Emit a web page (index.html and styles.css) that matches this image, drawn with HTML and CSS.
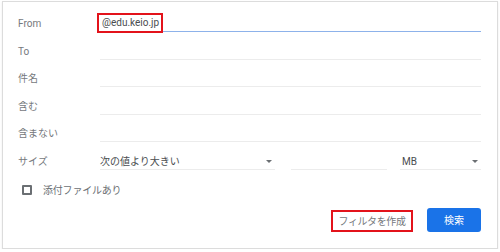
FILE: index.html
```html
<!DOCTYPE html>
<html lang="ja">
<head>
<meta charset="utf-8">
<title>検索オプション</title>
<link rel="stylesheet" href="styles.css">
</head>
<body>
<div class="panel">
  <div class="rows">
    <div class="row">
      <div class="label">From</div>
      <div class="field active"><span class="mark">@edu.keio.jp</span></div>
    </div>
    <div class="row">
      <div class="label">To</div>
      <div class="field"></div>
    </div>
    <div class="row">
      <div class="label">件名</div>
      <div class="field"></div>
    </div>
    <div class="row">
      <div class="label">含む</div>
      <div class="field"></div>
    </div>
    <div class="row">
      <div class="label">含まない</div>
      <div class="field"></div>
    </div>
    <div class="row">
      <div class="label">サイズ</div>
      <div class="size">
        <div class="field select sel1"><span>次の値より大きい</span><i class="caret"></i></div>
        <div class="field num"></div>
        <div class="field select sel2"><span>MB</span><i class="caret"></i></div>
      </div>
    </div>
  </div>
  <label class="check">
    <span class="box"></span>
    <span class="check-text">添付ファイルあり</span>
  </label>
  <div class="actions">
    <button class="btn-filter">フィルタを作成</button>
    <button class="btn-search">検索</button>
  </div>
</div>
</body>
</html>
```

FILE: styles.css
```css
html, body {
  margin: 0;
  padding: 0;
  background: #ffffff;
}
body {
  font-family: Roboto, "Noto Sans CJK JP", sans-serif;
  font-size: 10px;
  color: #4a4d50;
}
.panel {
  box-sizing: border-box;
  margin: 1px 0 0 2px;
  width: 496px;
  height: 248px;
  border: 1px solid #dcdcdc;
  box-shadow: 0 1px 2px rgba(0,0,0,0.08);
  padding: 2.5px 16px 0 15px;
  display: flex;
  flex-direction: column;
}
.rows {
  display: flex;
  flex-direction: column;
}
.row {
  display: grid;
  grid-template-columns: 82px 1fr;
  height: 27.5px;
  align-items: end;
}
.label {
  height: 16px;
  line-height: 16px;
  color: #76797d;
  white-space: nowrap;
}
.field {
  box-sizing: border-box;
  height: 16px;
  line-height: 15px;
  border-bottom: 1px solid #ececec;
  position: relative;
  color: #4a4d50;
}
.field.active {
  border-bottom-color: #8db2ea;
}
.mark {
  position: absolute;
  left: -3px;
  top: -3px;
  padding: 1px 2px 1px 3px;
  border: 2px solid #e3131b;
  line-height: 14px;
  color: #4a4d50;
  white-space: nowrap;
}
.size {
  display: flex;
  gap: 0;
  height: 16px;
}
.sel1 { width: 175px; margin-right: 16px; }
.num  { width: 96px; margin-right: 13px; }
.sel2 { width: 81px; }
.select {
  display: flex;
  align-items: center;
  justify-content: space-between;
  padding-right: 3px;
}
.sel2 span { padding-left: 2px; }
.caret {
  width: 0;
  height: 0;
  border-left: 3px solid transparent;
  border-right: 3px solid transparent;
  border-top: 3px solid #6b6f73;
  margin-top: 1px;
}
.check {
  display: flex;
  align-items: center;
  margin-top: 13px;
  margin-left: 4px;
  height: 14px;
}
.box {
  box-sizing: border-box;
  width: 10px;
  height: 10px;
  border: 2px solid #6b6f73;
  border-radius: 1px;
}
.check-text {
  margin-left: 11px;
  color: #6b6f73;
  letter-spacing: -0.2px;
}
.actions {
  display: flex;
  justify-content: flex-end;
  align-items: center;
  gap: 14px;
  margin-top: 11px;
}
button {
  font-family: Roboto, "Noto Sans CJK JP", sans-serif;
  font-size: 10px;
  cursor: pointer;
}
.btn-filter {
  box-sizing: border-box;
  width: 82px;
  height: 22px;
  margin-top: 2px;
  background: #ffffff;
  border: 2px solid #e3131b;
  color: #76797d;
  padding: 0;
  letter-spacing: -0.4px;
}
.btn-search {
  box-sizing: border-box;
  width: 54px;
  height: 24px;
  background: #1a73e8;
  color: #ffffff;
  border: none;
  border-radius: 3px;
  padding: 0;
}
```
